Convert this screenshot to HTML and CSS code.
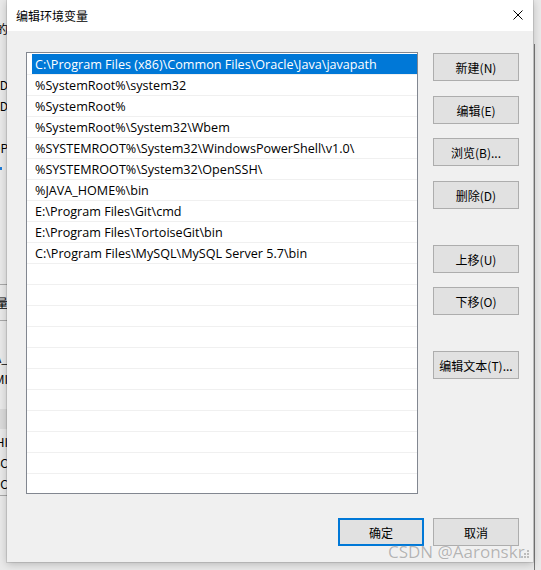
FILE: index.html
```html
<!DOCTYPE html>
<html lang="zh-CN">
<head>
    <meta charset="UTF-8">
    <title>编辑环境变量</title>
    <link rel="stylesheet" href="styles.css">
</head>
<body>
    <!-- the system properties window left open underneath -->
    <div class="behind">
        <div class="behind-col">
            <div class="peek" style="margin-top: 18px">目的</div>
            <div class="peek" style="margin-top: 35px">OD</div>
            <div class="peek">OD</div>
            <div class="peek" style="margin-top: 21px">OP</div>
            <div class="peek dot-row"><span class="dot"></span></div>
            <div class="rule" style="margin-top: 105px"></div>
            <div class="peek" style="margin-top: 7px">变量</div>
            <div class="rule" style="margin-top: 7px"></div>
            <div class="peek" style="margin-top: 26px">VA_</div>
            <div class="peek">UMI</div>
            <div class="band"></div>
            <div class="peek" style="margin-top: 2px">PHI</div>
            <div class="peek">SC</div>
            <div class="peek">OC</div>
            <div class="rule" style="margin-top: 1px"></div>
        </div>
        <div class="behind-edge"></div>
    </div>

    <div class="dialog">
        <div class="titlebar">
            <span class="title">编辑环境变量</span>
            <svg class="close" width="10" height="10" viewBox="0 0 10 10">
                <path d="M0.5 0.5 L9.5 9.5 M9.5 0.5 L0.5 9.5" stroke="#000" stroke-width="1" fill="none"/>
            </svg>
        </div>
        <div class="content">
            <div class="main">
                <div class="pathlist">
                    <div class="row"><span class="item selected">C:\Program Files (x86)\Common Files\Oracle\Java\javapath</span></div>
                    <div class="row"><span class="item">%SystemRoot%\system32</span></div>
                    <div class="row"><span class="item">%SystemRoot%</span></div>
                    <div class="row"><span class="item">%SystemRoot%\System32\Wbem</span></div>
                    <div class="row"><span class="item">%SYSTEMROOT%\System32\WindowsPowerShell\v1.0\</span></div>
                    <div class="row"><span class="item">%SYSTEMROOT%\System32\OpenSSH\</span></div>
                    <div class="row"><span class="item">%JAVA_HOME%\bin</span></div>
                    <div class="row"><span class="item">E:\Program Files\Git\cmd</span></div>
                    <div class="row"><span class="item">E:\Program Files\TortoiseGit\bin</span></div>
                    <div class="row"><span class="item">C:\Program Files\MySQL\MySQL Server 5.7\bin</span></div>
                    <div class="row"></div>
                    <div class="row"></div>
                    <div class="row"></div>
                    <div class="row"></div>
                    <div class="row"></div>
                    <div class="row"></div>
                    <div class="row"></div>
                    <div class="row"></div>
                    <div class="row"></div>
                    <div class="row"></div>
                </div>
                <div class="actions">
                    <button class="btn">新建(N)</button>
                    <button class="btn">编辑(E)</button>
                    <button class="btn">浏览(B)...</button>
                    <button class="btn">删除(D)</button>
                    <button class="btn group">上移(U)</button>
                    <button class="btn">下移(O)</button>
                    <button class="btn group">编辑文本(T)...</button>
                </div>
            </div>
            <div class="footer">
                <button class="btn default">确定</button>
                <button class="btn">取消</button>
            </div>
        </div>
        <svg class="grip" width="8" height="8" viewBox="0 0 8 8">
            <rect x="6" y="0" width="2" height="2" fill="#bcbcbc"/>
            <rect x="3" y="3" width="2" height="2" fill="#bcbcbc"/>
            <rect x="6" y="3" width="2" height="2" fill="#bcbcbc"/>
            <rect x="0" y="6" width="2" height="2" fill="#bcbcbc"/>
            <rect x="3" y="6" width="2" height="2" fill="#bcbcbc"/>
            <rect x="6" y="6" width="2" height="2" fill="#bcbcbc"/>
        </svg>
    </div>

    <div class="watermark">CSDN @Aaronskr</div>
</body>
</html>
```

FILE: styles.css
```css
body {
    margin: 0;
    width: 541px;
    height: 570px;
    overflow: hidden;
    position: relative;
    background: #e9e9e9;
    font-family: "Microsoft YaHei UI", "Noto Sans CJK SC", sans-serif;
    font-size: 12px;
    color: #000;
}

/* window underneath */
.behind {
    display: flex;
    height: 570px;
}
.behind-col {
    width: 12px;
    display: flex;
    flex-direction: column;
}
.peek {
    height: 21px;
    line-height: 21px;
    display: flex;
    justify-content: flex-end;
    white-space: nowrap;
    padding-right: 4px;
    color: #000;
}
.dot-row {
    height: 21px;
    align-items: center;
}
.dot {
    width: 2px;
    height: 3px;
    background: #1e7bd6;
    margin-right: 6px;
}
.rule {
    height: 1px;
    background: #a8a8a8;
}
.band {
    height: 20px;
    margin-top: 20px;
    background: #dadada;
}
.behind-edge {
    margin-left: 522px;
    margin-top: 44px;
    width: 1px;
    height: 526px;
    background: #787878;
}

/* dialog */
.dialog {
    position: absolute;
    left: 7px;
    top: 0;
    width: 526px;
    height: 562px;
    background: #f0f0f0;
    box-shadow: 0 0 0 1px rgba(0, 0, 0, 0.1), 0 2px 8px rgba(0, 0, 0, 0.22);
}
.titlebar {
    height: 31px;
    background: #fff;
    display: flex;
    align-items: center;
    justify-content: space-between;
    padding: 0 10px 0 9px;
}
.title {
    font-size: 12px;
    padding-bottom: 1px;
}
.close {
    display: block;
    margin-bottom: 1px;
}
.content {
    padding: 21px 14px 0 19px;
}
.main {
    display: flex;
    gap: 15px;
}
.pathlist {
    width: 392px;
    height: 442px;
    box-sizing: border-box;
    border: 1px solid #828790;
    background: #fff;
    padding-top: 1px;
    overflow: hidden;
}
.row {
    height: 20px;
    border-bottom: 1px solid #f0f0f0;
    display: flex;
}
.item {
    flex: 1;
    margin-left: 5px;
    padding-left: 3px;
    line-height: 21px;
    white-space: nowrap;
    font-family: "Open Sans", "Noto Sans CJK SC", sans-serif;
    font-size: 12.6px;
}
.item.selected {
    background: #0078d7;
    color: #fff;
}
.actions {
    display: flex;
    flex-direction: column;
    gap: 15px;
    padding-top: 1px;
}
.btn {
    width: 86px;
    height: 28px;
    box-sizing: border-box;
    background: #e1e1e1;
    border: 1px solid #adadad;
    border-radius: 0;
    font-family: "Microsoft YaHei UI", "Noto Sans CJK SC", sans-serif;
    font-size: 12px;
    color: #000;
    padding: 0;
    margin: 0;
}
.actions .btn:nth-child(3) {
    margin-top: -1px;
}
.actions .btn:nth-child(6) {
    margin-top: -1px;
}
.actions .btn.group {
    margin-top: 21px;
}
.footer {
    display: flex;
    justify-content: flex-end;
    gap: 9px;
    margin-top: 24px;
}
.btn.default {
    border: 2px solid #0078d7;
}
.grip {
    position: absolute;
    right: 4px;
    bottom: 4px;
}

.watermark {
    position: absolute;
    left: 388px;
    top: 540px;
    font-family: "Open Sans", sans-serif;
    font-size: 17px;
    color: rgba(120, 120, 120, 0.55);
    text-shadow: 0 0 1px rgba(255, 255, 255, 0.8);
    white-space: nowrap;
}
```
